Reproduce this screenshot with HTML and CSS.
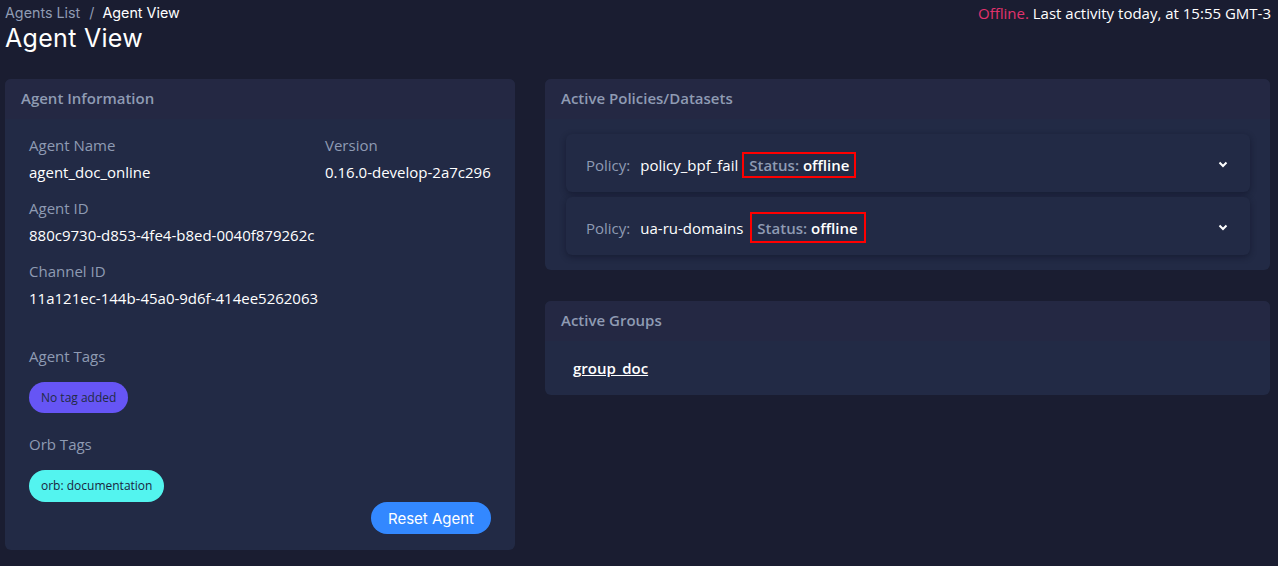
FILE: index.html
```html
<!DOCTYPE html>
<html>
<head>
<meta charset="utf-8">
<link rel="stylesheet" href="styles.css">
</head>
<body>
<div class="top">
  <div class="titles">
    <div class="crumbs"><span class="crumb-link">Agents List</span><span class="sep">/</span><span class="crumb-cur">Agent View</span></div>
    <h1 class="title">Agent View</h1>
  </div>
  <div class="activity"><span class="offline">Offline.</span> Last activity today, at 15:55 GMT-3</div>
</div>
<div class="main">
  <section class="card info">
    <header class="card-head">Agent Information</header>
    <div class="card-body info-body">
      <div class="row two">
        <div class="field"><div class="label">Agent Name</div><div class="value">agent_doc_online</div></div>
        <div class="field"><div class="label">Version</div><div class="value">0.16.0-develop-2a7c296</div></div>
      </div>
      <div class="field"><div class="label">Agent ID</div><div class="value">880c9730-d853-4fe4-b8ed-0040f879262c</div></div>
      <div class="field"><div class="label">Channel ID</div><div class="value">11a121ec-144b-45a0-9d6f-414ee5262063</div></div>
      <div class="field tags-field"><div class="label">Agent Tags</div><div class="chip chip-purple">No tag added</div></div>
      <div class="field tags-field2"><div class="label">Orb Tags</div><div class="chip chip-cyan">orb: documentation</div></div>
      <div class="actions"><button class="btn">Reset Agent</button></div>
    </div>
  </section>
  <div class="right">
    <section class="card policies">
      <header class="card-head">Active Policies/Datasets</header>
      <div class="card-body pol-body">
        <div class="acc">
          <div class="acc-left"><span class="plabel">Policy:</span><span class="pname">policy_bpf_fail</span><span class="status s1"><span class="slabel">Status:</span> <b>offline</b></span></div>
          <svg class="chev" width="10" height="7" viewBox="0 0 10 7"><path d="M1.5 1.5 L5 5 L8.5 1.5" fill="none" stroke="#fff" stroke-width="2"/></svg>
        </div>
        <div class="acc">
          <div class="acc-left"><span class="plabel">Policy:</span><span class="pname">ua-ru-domains</span><span class="status s2"><span class="slabel">Status:</span> <b>offline</b></span></div>
          <svg class="chev" width="10" height="7" viewBox="0 0 10 7"><path d="M1.5 1.5 L5 5 L8.5 1.5" fill="none" stroke="#fff" stroke-width="2"/></svg>
        </div>
      </div>
    </section>
    <section class="card groups">
      <header class="card-head">Active Groups</header>
      <div class="card-body grp-body"><a class="grp">group_doc</a></div>
    </section>
  </div>
</div>
</body>
</html>
```
FILE: styles.css
```css
* { box-sizing: border-box; }
html, body { margin: 0; padding: 0; }
body {
  background: #1a1d31;
  font-family: "Open Sans", "Liberation Sans", sans-serif;
  color: #fff;
  width: 1278px;
  height: 566px;
  overflow: hidden;
}
.top {
  display: flex;
  justify-content: space-between;
  align-items: flex-start;
  padding: 3px 7px 0 5px;
}
.crumbs {
  font-family: "Inter", "Open Sans", sans-serif;
  font-size: 14.3px;
  line-height: 20px;
  color: #fff;
}
.crumb-link { color: #8f9bb3; }
.sep { color: #8f9bb3; margin: 0 8px 0 9px; }
.title {
  margin: 0;
  font-family: "Inter", "Open Sans", sans-serif;
  font-weight: 400;
  font-size: 25px;
  line-height: 30px;
  letter-spacing: 0.3px;
}
.activity {
  font-size: 15px;
  line-height: 20px;
  color: #fff;
}
.offline { color: #e1326d; }
.main {
  display: flex;
  gap: 30px;
  padding: 26px 8px 0 5px;
  align-items: flex-start;
}
.card {
  background: #222a45;
  border-radius: 6px;
  overflow: hidden;
}
.card-head {
  background: #242843;
  color: #8f9bb3;
  font-weight: 600;
  font-size: 15px;
  line-height: 20px;
  padding: 9px 16px 11px 16px;
}
.info { width: 510px; height: 471px; }
.info-body {
  padding: 16px 24px 0 24px;
  display: flex;
  flex-direction: column;
}
.row.two { display: grid; grid-template-columns: 296px 1fr; }
.field { margin-bottom: 16px; }
.label { color: #8f9bb3; font-size: 15px; line-height: 20px; margin-bottom: 7px; }
.value { font-size: 15px; line-height: 20px; }
.tags-field { margin-top: 22px; margin-bottom: 21px; }
.tags-field .label { margin-bottom: 16px; }
.tags-field2 .label { margin-bottom: 16px; }
.tags-field2 { margin-bottom: 0; }
.chip {
  display: inline-block;
  border-radius: 16px;
  font-size: 12px;
  line-height: 16px;
  padding: 8px 12px;
  height: 32px;
}
.chip-purple { background: #6655f5; color: #222b45; height: 31px; padding-top: 7.5px; }
.chip-cyan { background: #53f4ef; color: #1b2540; }
.actions { display: flex; justify-content: flex-end; }
.btn {
  background: #3388ff;
  color: #fff;
  border: 0;
  border-radius: 16px;
  height: 32px;
  width: 120px;
  font-family: "Inter", "Open Sans", sans-serif;
  font-size: 15px;
  padding: 0;
}
.right { flex: 1; display: flex; flex-direction: column; gap: 31px; }
.policies { height: 191px; }
.pol-body { padding: 15px 20px 0 21px; display: flex; flex-direction: column; gap: 5px; }
.acc {
  height: 58px;
  background: #222a45;
  border-radius: 6px;
  box-shadow: 0 2px 6px rgba(10, 14, 30, 0.45);
  display: flex;
  align-items: center;
  justify-content: space-between;
  padding: 3px 22px 0 20px;
  font-size: 15px;
}
.acc-left { display: flex; align-items: center; }
.plabel { color: #8f9bb3; margin-right: 10px; }
.pname { color: #fff; margin-right: 4px; }
.status {
  border: 2px solid #ff0000;
  padding: 0 5px;
  line-height: 20px;
  display: inline-block;
}
.s1 { height: 26px; padding-top: 1px; }
.s2 { height: 31px; padding-top: 3.5px; margin-left: 3px; padding-right: 6px; }
.slabel { color: #8f9bb3; font-weight: 600; }
.status b { font-weight: 600; color: #fff; }
.groups { height: 94px; }
.grp-body { padding: 16px 28px; }
.grp {
  color: #fff;
  font-weight: 600;
  font-size: 15px;
  text-decoration: underline;
  line-height: 20px;
}
```
